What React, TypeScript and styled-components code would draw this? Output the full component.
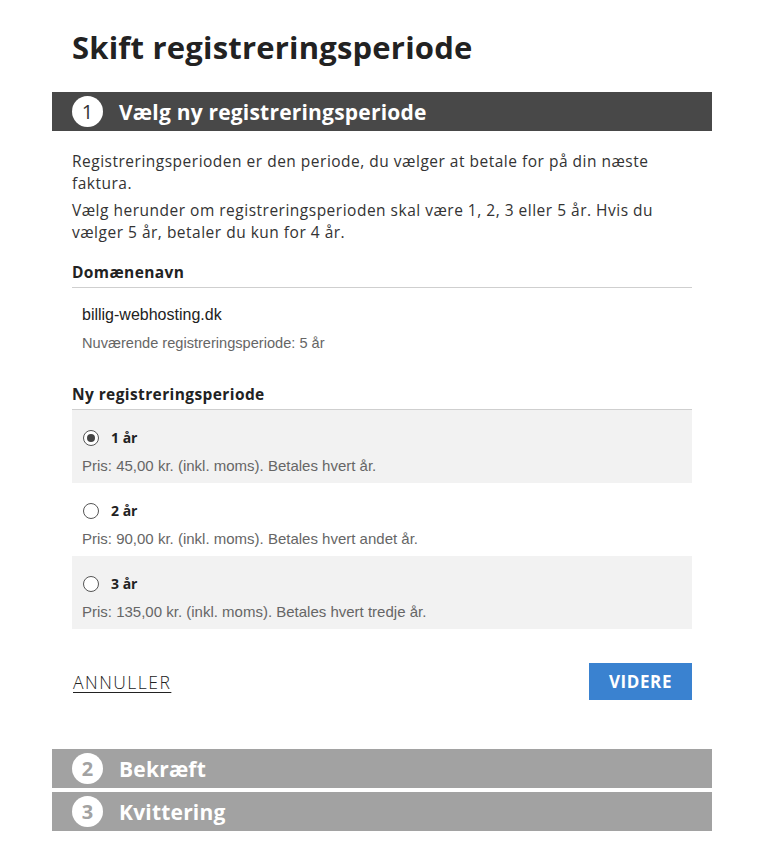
import React, { useState } from "react";
import styled, { createGlobalStyle } from "styled-components";

const GlobalStyle = createGlobalStyle`
  body {
    margin: 0;
    background: #fff;
    font-family: "Open Sans", "Liberation Sans", sans-serif;
    color: #222;
  }
`;

const Page = styled.div`
  width: 660px;
  margin-left: 52px;
  padding-bottom: 26px;
`;

const Title = styled.h1`
  margin: 0;
  padding: 29px 20px 0;
  height: 92px;
  box-sizing: border-box;
  font-size: 31px;
  line-height: 36px;
  font-weight: 700;
  letter-spacing: 0.2px;
  color: #222;
`;

const StepHeader = styled.div<{ $active?: boolean }>`
  display: flex;
  align-items: center;
  gap: 16px;
  height: 39px;
  padding-left: 20px;
  background: ${(p) => (p.$active ? "#484848" : "#a2a2a2")};
  color: #fff;
  font-size: 21px;
  font-weight: 700;
  letter-spacing: 0.2px;
  & + & {
    margin-top: 4px;
  }
`;

const StepNumber = styled.span<{ $active?: boolean }>`
  display: flex;
  align-items: center;
  justify-content: center;
  width: 31px;
  height: 31px;
  border-radius: 50%;
  background: #fff;
  color: ${(p) => (p.$active ? "#333" : "#a2a2a2")};
  font-size: 20px;
  font-weight: ${(p) => (p.$active ? 400 : 700)};
  letter-spacing: 0;
`;

const Body = styled.div`
  padding: 20px 20px 0;
`;

const Paragraph = styled.p`
  margin: 0 0 6px;
  max-width: 590px;
  font-size: 15.5px;
  line-height: 21.5px;
  letter-spacing: 0.5px;
  color: #333;
`;

const SectionTitle = styled.div<{ $gap: number }>`
  margin-top: ${(p) => p.$gap}px;
  padding-bottom: 5px;
  border-bottom: 1px solid #cfcfcf;
  font-size: 15.5px;
  line-height: 20px;
  font-weight: 700;
  letter-spacing: 0.4px;
  color: #222;
`;

const DomainBlock = styled.div`
  padding: 16px 10px 20px;
  font-family: "Liberation Sans", Arial, sans-serif;
`;

const DomainName = styled.div`
  font-size: 16px;
  line-height: 22px;
  color: #222;
`;

const CurrentPeriod = styled.div`
  margin-top: 8px;
  font-size: 14.6px;
  line-height: 18px;
  color: #666;
`;

const OptionList = styled.div`
  display: flex;
  flex-direction: column;
`;

const Option = styled.label<{ $shaded?: boolean }>`
  display: flex;
  flex-direction: column;
  gap: 10px;
  height: 73px;
  box-sizing: border-box;
  padding: 18px 10px 0 11px;
  background: ${(p) => (p.$shaded ? "#f2f2f2" : "#fff")};
  cursor: pointer;
`;

const OptionHead = styled.div`
  display: flex;
  align-items: center;
  gap: 12px;
  font-size: 14px;
  font-weight: 700;
  color: #222;
`;

const Radio = styled.span<{ $checked?: boolean }>`
  position: relative;
  width: 16px;
  height: 16px;
  box-sizing: border-box;
  border-radius: 50%;
  border: 1px solid #555;
  background: #fff;
  &::after {
    content: "";
    display: ${(p) => (p.$checked ? "block" : "none")};
    position: absolute;
    left: 3px;
    top: 3px;
    width: 8px;
    height: 8px;
    border-radius: 50%;
    background: #444;
  }
`;

const Price = styled.div`
  margin-left: -1px;
  font-family: "Liberation Sans", Arial, sans-serif;
  font-size: 15px;
  line-height: 18px;
  color: #666;
`;

const Actions = styled.div`
  display: flex;
  align-items: center;
  justify-content: space-between;
  margin: 34px 0 49px;
`;

const CancelLink = styled.a`
  margin-left: 1px;
  font-size: 17.5px;
  font-weight: 300;
  letter-spacing: 1.5px;
  color: #222;
  text-decoration: underline;
  text-decoration-thickness: 1px;
  text-underline-offset: 3px;
  cursor: pointer;
`;

const NextButton = styled.button`
  width: 103px;
  height: 37px;
  border: 0;
  background: #3a82d0;
  color: #fff;
  font-family: "Open Sans", sans-serif;
  font-size: 17px;
  font-weight: 700;
  letter-spacing: 0.6px;
  cursor: pointer;
`;

const options = [
  { years: 1, price: "45,00", text: "Betales hvert år." },
  { years: 2, price: "90,00", text: "Betales hvert andet år." },
  { years: 3, price: "135,00", text: "Betales hvert tredje år." },
];

export default function App() {
  const [selected, setSelected] = useState(1);

  return (
    <>
      <GlobalStyle />
      <Page>
        <Title>Skift registreringsperiode</Title>
        <StepHeader $active>
          <StepNumber $active>1</StepNumber>
          Vælg ny registreringsperiode
        </StepHeader>
        <Body>
          <Paragraph>
            Registreringsperioden er den periode, du vælger at betale for på din
            næste faktura.
          </Paragraph>
          <Paragraph>
            Vælg herunder om registreringsperioden skal være 1, 2, 3 eller 5 år.
            Hvis du vælger 5 år, betaler du kun for 4 år.
          </Paragraph>
          <SectionTitle $gap={19}>Domænenavn</SectionTitle>
          <DomainBlock>
            <DomainName>billig-webhosting.dk</DomainName>
            <CurrentPeriod>Nuværende registreringsperiode: 5 år</CurrentPeriod>
          </DomainBlock>
          <SectionTitle $gap={12}>Ny registreringsperiode</SectionTitle>
          <OptionList>
            {options.map((o, i) => (
              <Option
                key={o.years}
                $shaded={i % 2 === 0}
                onClick={() => setSelected(o.years)}
              >
                <OptionHead>
                  <Radio $checked={selected === o.years} />
                  {o.years} år
                </OptionHead>
                <Price>
                  Pris: {o.price} kr. (inkl. moms). {o.text}
                </Price>
              </Option>
            ))}
          </OptionList>
          <Actions>
            <CancelLink>ANNULLER</CancelLink>
            <NextButton>VIDERE</NextButton>
          </Actions>
        </Body>
        <StepHeader>
          <StepNumber>2</StepNumber>
          Bekræft
        </StepHeader>
        <StepHeader>
          <StepNumber>3</StepNumber>
          Kvittering
        </StepHeader>
      </Page>
    </>
  );
}
